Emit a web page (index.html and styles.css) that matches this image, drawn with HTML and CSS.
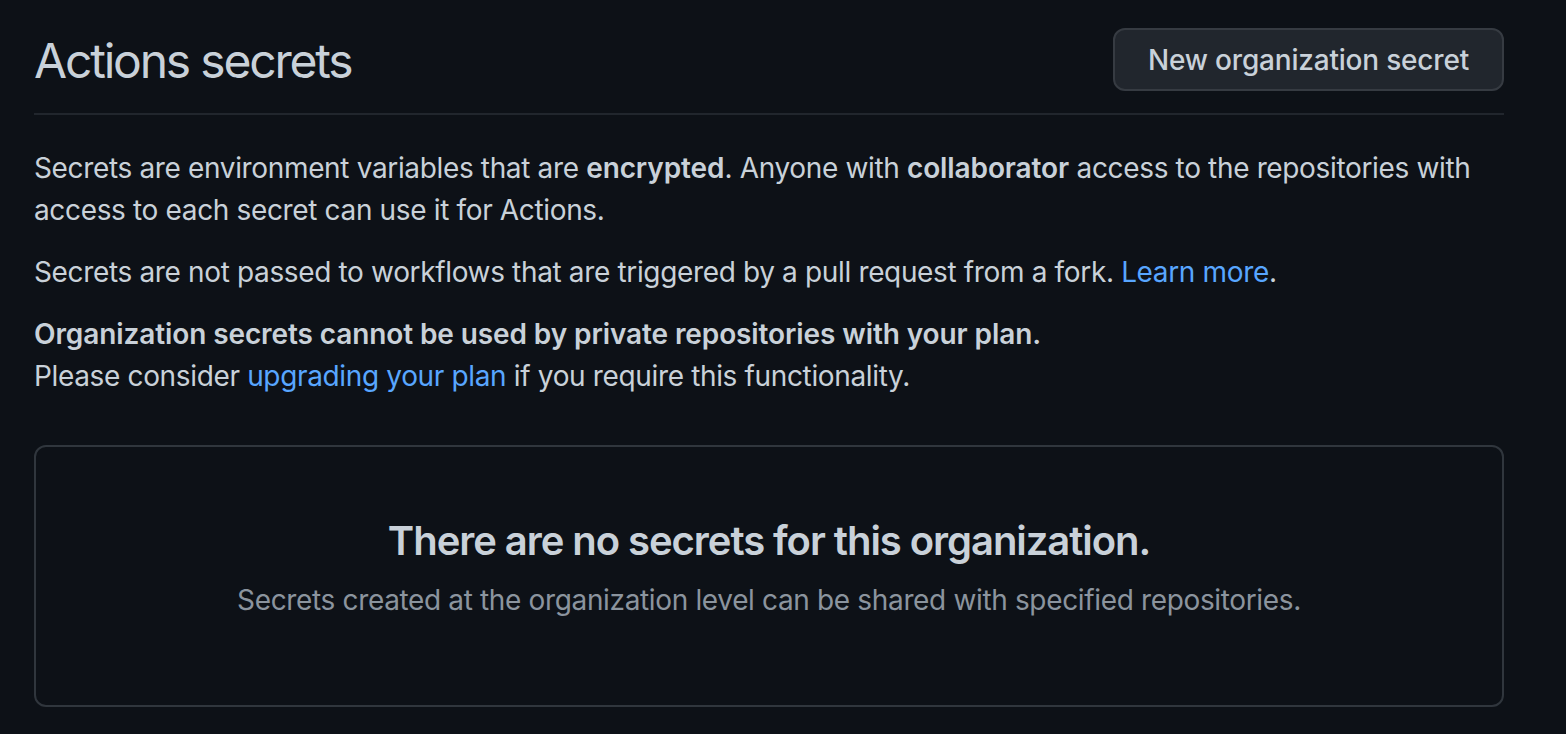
FILE: index.html
```html
<!DOCTYPE html>
<html lang="en">
<head>
<meta charset="utf-8">
<title>Actions secrets</title>
<link rel="stylesheet" href="styles.css">
</head>
<body>
<main class="page">
  <div class="subhead">
    <h2 class="subhead-heading">Actions secrets</h2>
    <button class="btn" type="button">New organization secret</button>
  </div>
  <p class="para">Secrets are environment variables that are <strong>encrypted</strong>. Anyone with <strong>collaborator</strong> access to the repositories with access to each secret can use it for Actions.</p>
  <p class="para">Secrets are not passed to workflows that are triggered by a pull request from a fork. <a class="link" href="#">Learn more</a>.</p>
  <p class="para"><strong>Organization secrets cannot be used by private repositories with your plan.</strong><br>Please consider <a class="link" href="#">upgrading your plan</a> if you require this functionality.</p>
  <div class="blankslate">
    <h3 class="blankslate-heading">There are no secrets for this organization.</h3>
    <p class="blankslate-text">Secrets created at the organization level can be shared with specified repositories.</p>
  </div>
</main>
</body>
</html>
```

FILE: styles.css
```css
html, body {
  margin: 0;
  padding: 0;
  background: #0d1117;
}
body {
  font-family: Inter, "Noto Sans", "Liberation Sans", sans-serif;
  font-size: 28px;
  line-height: 42px;
  letter-spacing: -0.35px;
  color: #c9d1d9;
}
.page {
  width: 1470px;
  margin-left: 34px;
  padding-top: 28px;
}
.subhead {
  display: flex;
  align-items: flex-end;
  justify-content: space-between;
  padding-bottom: 22px;
  border-bottom: 2px solid #21262d;
  margin-bottom: 32px;
}
.subhead-heading {
  margin: 0;
  font-size: 48px;
  line-height: 60px;
  font-weight: 400;
  letter-spacing: -2.2px;
  color: #c9d1d9;
}
.btn {
  height: 63px;
  padding: 0 33px;
  border: 2px solid #363b42;
  border-radius: 12px;
  background: #21262d;
  color: #c9d1d9;
  font-family: inherit;
  font-size: 28px;
  font-weight: 500;
  line-height: 42px;
  letter-spacing: -0.2px;
}
.para {
  margin: 0 0 20px;
}
.para strong {
  font-weight: 600;
  letter-spacing: -0.1px;
}
.link {
  color: #58a6ff;
  text-decoration: none;
}
.blankslate {
  margin-top: 48px;
  border: 2px solid #30363d;
  border-radius: 12px;
  padding: 64px;
  text-align: center;
}
.blankslate-heading {
  margin: 0;
  font-size: 40px;
  line-height: 60px;
  font-weight: 600;
  letter-spacing: -1.05px;
  color: #c9d1d9;
}
.blankslate-text {
  margin: 8px 0 20px;
  color: #8b949e;
}
```
